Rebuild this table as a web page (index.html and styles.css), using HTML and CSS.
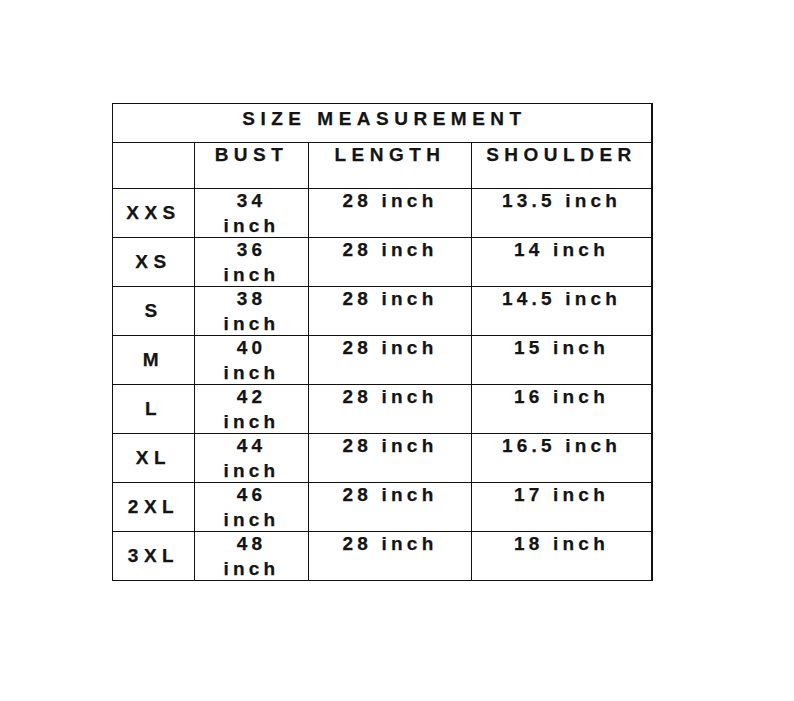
FILE: index.html
```html
<!DOCTYPE html>
<html lang="en">
<head>
<meta charset="utf-8">
<title>Size Measurement</title>
<link rel="stylesheet" href="styles.css">
</head>
<body>
<div class="page">
  <div class="chart">
    <div class="cell title">SIZE MEASUREMENT</div>

    <div class="cell head"></div>
    <div class="cell head">BUST</div>
    <div class="cell head">LENGTH</div>
    <div class="cell head">SHOULDER</div>

    <div class="cell size">XXS</div>
    <div class="cell val"><span>34<br>inch</span></div>
    <div class="cell val"><span>28 inch</span></div>
    <div class="cell val"><span>13.5 inch</span></div>

    <div class="cell size">XS</div>
    <div class="cell val"><span>36<br>inch</span></div>
    <div class="cell val"><span>28 inch</span></div>
    <div class="cell val"><span>14 inch</span></div>

    <div class="cell size">S</div>
    <div class="cell val"><span>38<br>inch</span></div>
    <div class="cell val"><span>28 inch</span></div>
    <div class="cell val"><span>14.5 inch</span></div>

    <div class="cell size">M</div>
    <div class="cell val"><span>40<br>inch</span></div>
    <div class="cell val"><span>28 inch</span></div>
    <div class="cell val"><span>15 inch</span></div>

    <div class="cell size">L</div>
    <div class="cell val"><span>42<br>inch</span></div>
    <div class="cell val"><span>28 inch</span></div>
    <div class="cell val"><span>16 inch</span></div>

    <div class="cell size">XL</div>
    <div class="cell val"><span>44<br>inch</span></div>
    <div class="cell val"><span>28 inch</span></div>
    <div class="cell val"><span>16.5 inch</span></div>

    <div class="cell size">2XL</div>
    <div class="cell val"><span>46<br>inch</span></div>
    <div class="cell val"><span>28 inch</span></div>
    <div class="cell val"><span>17 inch</span></div>

    <div class="cell size">3XL</div>
    <div class="cell val"><span>48<br>inch</span></div>
    <div class="cell val"><span>28 inch</span></div>
    <div class="cell val"><span>18 inch</span></div>
  </div>
</div>
</body>
</html>
```

FILE: styles.css
```css
html, body {
  margin: 0;
  padding: 0;
  background: #ffffff;
}

.page {
  padding: 103px 0 0 112px;
}

.chart {
  display: inline-grid;
  grid-template-columns: 81px 113px 162px 179px;
  grid-template-rows: 38px 45px repeat(8, 48px);
  gap: 1px;
  background: #111111;
  border-top: 1px solid #111111;
  border-left: 1px solid #111111;
  border-right: 2px solid #111111;
  border-bottom: 1px solid #111111;
  font-family: "Liberation Sans", Arial, sans-serif;
  font-weight: bold;
  font-size: 19px;
  letter-spacing: 5.5px;
  color: #141414;
  -webkit-text-stroke: 0.25px #141414;
}

.cell {
  background: #ffffff;
  text-align: center;
  white-space: nowrap;
}

.title {
  grid-column: 1 / -1;
  line-height: 22px;
  padding-top: 4px;
  padding-left: 5px;
}

.head {
  line-height: 22px;
  padding-top: 1px;
}

.size {
  display: flex;
  align-items: center;
  justify-content: center;
  line-height: 22px;
}

.val span {
  display: block;
  letter-spacing: 4.2px;
  line-height: 25px;
  margin-top: -1px;
}
```
